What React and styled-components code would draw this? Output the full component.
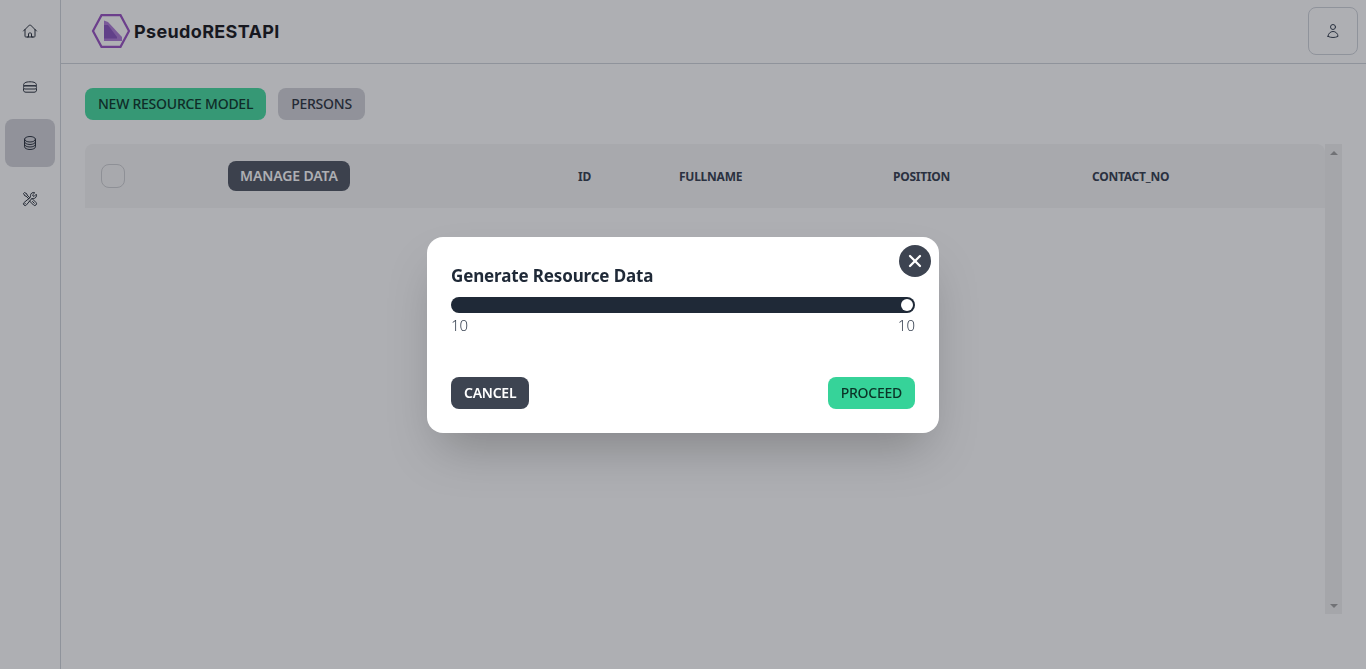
import React from "react";
import styled, { createGlobalStyle } from "styled-components";
import {
  HiOutlineHome,
  HiOutlineCircleStack,
  HiOutlineWrenchScrewdriver,
  HiOutlineUser,
} from "react-icons/hi2";
import { X } from "lucide-react";

const GlobalStyle = createGlobalStyle`
  * { box-sizing: border-box; }
  html, body { margin: 0; height: 100%; }
  body {
    background: #fff;
    color: #1f2937;
    font-family: "Noto Sans", "Liberation Sans", sans-serif;
    overflow: hidden;
  }
`;

const Shell = styled.div`
  display: flex;
  height: 669px;
`;

const Sidebar = styled.nav`
  width: 61px;
  flex: none;
  border-right: 1px solid #d1d5db;
  display: flex;
  flex-direction: column;
  align-items: center;
  padding: 7px 0 0 0;
  gap: 8px;
`;

const NavItem = styled.div`
  width: 50px;
  height: 48px;
  display: flex;
  align-items: center;
  justify-content: center;
  border-radius: 8px;
  color: #2f3642;
  font-size: 16px;
  background: ${(props) => (props.$active ? "#d3d4d9" : "transparent")};
  margin-right: 1px;
`;

const Main = styled.main`
  flex: 1;
  min-width: 0;
  display: flex;
  flex-direction: column;
`;

const Header = styled.header`
  height: 64px;
  flex: none;
  border-bottom: 1px solid #d1d5db;
  display: flex;
  align-items: center;
  justify-content: space-between;
  padding: 0 8px 1px 30px;
`;

const Brand = styled.div`
  display: flex;
  align-items: center;
  gap: 3px;
`;

const BrandName = styled.span`
  font-family: "Inter", "Liberation Sans", sans-serif;
  font-size: 18px;
  font-weight: 700;
  letter-spacing: 0.35px;
  color: #1b1b1f;
`;

const ProfileButton = styled.button`
  width: 50px;
  height: 48px;
  border: 1px solid #d1d5db;
  border-radius: 8px;
  background: transparent;
  color: #374151;
  font-size: 16px;
  display: flex;
  align-items: center;
  justify-content: center;
  padding: 0;
`;

const Content = styled.div`
  padding: 24px 24px 0 24px;
  display: flex;
  flex-direction: column;
  gap: 24px;
`;

const Toolbar = styled.div`
  display: flex;
  gap: 12px;
`;

const buttonColors = {
  success: ["#36d399", "#0b3327"],
  successMuted: ["#49dca2", "#0f3a2c"],
  dark: ["#3d4451", "#fff"],
  slate: ["#525865", "#fff"],
  plain: ["#d3d4d9", "#2f3642"],
};

const Button = styled.button`
  display: inline-block;
  height: ${(props) => (props.$compact ? 30 : 32)}px;
  padding: 0 ${(props) => (props.$compact ? 12 : 13)}px;
  border: none;
  border-radius: 8px;
  font-family: inherit;
  font-size: 14px;
  font-weight: ${(props) => (props.$strong ? 600 : 500)};
  letter-spacing: ${(props) => (props.$compact ? -0.12 : -0.25)}px;
  line-height: ${(props) => (props.$compact ? 30 : 32)}px;
  white-space: nowrap;
  background: ${(props) => buttonColors[props.$kind || "plain"][0]};
  color: ${(props) => buttonColors[props.$kind || "plain"][1]};
`;

const TableFrame = styled.div`
  display: flex;
  width: 1257px;
  height: 470px;
`;

const TableArea = styled.div`
  flex: 1;
  min-width: 0;
`;

const TableHead = styled.div`
  height: 64px;
  background: #f6f6f6;
  border-top-left-radius: 8px;
  border-top-right-radius: 8px;
  padding-left: 16px;
  display: grid;
  grid-template-columns: 127px 350px 101px 214px 199px 1fr;
  align-items: center;
`;

const Checkbox = styled.span`
  width: 24px;
  height: 24px;
  border: 1px solid #cfd0d3;
  border-radius: 8px;
  background: #f6f6f6;
`;

const ManageCell = styled.div`
  display: flex;
  align-items: center;
`;

const ColumnLabel = styled.span`
  font-size: 12px;
  font-weight: 700;
  letter-spacing: -0.25px;
  color: #374151;
  text-transform: uppercase;
  line-height: 16px;
  padding-top: 2px;
`;

const Scrollbar = styled.div`
  width: 17px;
  flex: none;
  background: #f1f1f1;
  display: flex;
  flex-direction: column;
  justify-content: space-between;
  align-items: center;
  padding: 7px 0 6px;
`;

const ScrollArrow = styled.span`
  width: 0;
  height: 0;
  border-left: 4px solid transparent;
  border-right: 4px solid transparent;
  ${(props) =>
    props.$down
      ? "border-top: 4px solid #a3a3a3;"
      : "border-bottom: 4px solid #a3a3a3;"}
`;

const Backdrop = styled.div`
  position: fixed;
  inset: 0;
  background: rgba(18, 21, 33, 0.34);
  display: flex;
  align-items: center;
  justify-content: center;
`;

const Modal = styled.div`
  position: relative;
  width: 512px;
  height: 196px;
  background: #fff;
  border-radius: 16px;
  padding: 24px;
  box-shadow: 0 25px 50px -12px rgba(0, 0, 0, 0.25);
  display: flex;
  flex-direction: column;
`;

const CloseButton = styled.button`
  position: absolute;
  top: 8px;
  right: 8px;
  width: 32px;
  height: 32px;
  border: none;
  border-radius: 50%;
  padding: 0;
  background: #3d4451;
  color: #fff;
  display: flex;
  align-items: center;
  justify-content: center;
`;

const Title = styled.h3`
  margin: 1px 0 7px 0;
  font-size: 17px;
  font-weight: 700;
  letter-spacing: -0.14px;
  line-height: 28px;
  color: #1f2937;
`;

const Track = styled.div`
  height: 16px;
  border-radius: 8px;
  background: #1f2937;
  display: flex;
  align-items: center;
  justify-content: flex-end;
  padding-right: 2px;
`;

const Thumb = styled.span`
  width: 12px;
  height: 12px;
  border-radius: 50%;
  background: #fff;
`;

const RangeLabels = styled.div`
  display: flex;
  justify-content: space-between;
  font-size: 15px;
  font-weight: 300;
  line-height: 20px;
  margin-top: 2px;
  color: #374151;
`;

const Actions = styled.div`
  margin-top: auto;
  display: flex;
  justify-content: space-between;
`;

const StackIcon = () => (
  <svg width="16" height="16" viewBox="0 0 16 16" fill="none" stroke="currentColor" strokeWidth="1">
    <path d="M1.5 6.5C1.5 4 3.5 2.8 8 2.8s6.5 1.2 6.5 3.7v.3h-13z" />
    <rect x="1.5" y="6.8" width="13" height="3.2" rx="1.4" />
    <path d="M1.5 9.5v1.7c0 1.3 1 2 2.5 2h8c1.5 0 2.5-.7 2.5-2V9.5" />
  </svg>
);

const Logo = () => (
  <svg width="40" height="36" viewBox="0 0 40 36">
    <path d="M10.5 2.2h19L38 18l-8.5 15.8h-19L2 18z" fill="none" stroke="#9c55c4" strokeWidth="2.2" />
    <path d="M13 7.5l4 1.5 14 15v4H13z" fill="#b07fd8" />
    <path d="M13 12l4 0 9 12v1.5H13z" fill="#8a57c0" />
  </svg>
);

const columns = ["ID", "fullname", "position", "contact_no"];

export default function App() {
  return (
    <>
      <GlobalStyle />
      <Shell>
        <Sidebar>
          <NavItem><HiOutlineHome /></NavItem>
          <NavItem><StackIcon /></NavItem>
          <NavItem $active><HiOutlineCircleStack /></NavItem>
          <NavItem><HiOutlineWrenchScrewdriver /></NavItem>
        </Sidebar>
        <Main>
          <Header>
            <Brand>
              <Logo />
              <BrandName>PseudoRESTAPI</BrandName>
            </Brand>
            <ProfileButton aria-label="Profile"><HiOutlineUser /></ProfileButton>
          </Header>
          <Content>
            <Toolbar>
              <Button $kind="successMuted">NEW RESOURCE MODEL</Button>
              <Button>PERSONS</Button>
            </Toolbar>
            <TableFrame>
              <TableArea>
                <TableHead>
                  <Checkbox />
                  <ManageCell>
                    <Button $kind="slate" $strong $compact>MANAGE DATA</Button>
                  </ManageCell>
                  {columns.map((name) => (
                    <ColumnLabel key={name}>{name}</ColumnLabel>
                  ))}
                </TableHead>
              </TableArea>
              <Scrollbar>
                <ScrollArrow />
                <ScrollArrow $down />
              </Scrollbar>
            </TableFrame>
          </Content>
        </Main>
      </Shell>
      <Backdrop>
        <Modal>
          <CloseButton aria-label="Close"><X size={20} strokeWidth={2.75} /></CloseButton>
          <Title>Generate Resource Data</Title>
          <Track><Thumb /></Track>
          <RangeLabels>
            <span>10</span>
            <span>10</span>
          </RangeLabels>
          <Actions>
            <Button $kind="dark" $strong>CANCEL</Button>
            <Button $kind="success">PROCEED</Button>
          </Actions>
        </Modal>
      </Backdrop>
    </>
  );
}
